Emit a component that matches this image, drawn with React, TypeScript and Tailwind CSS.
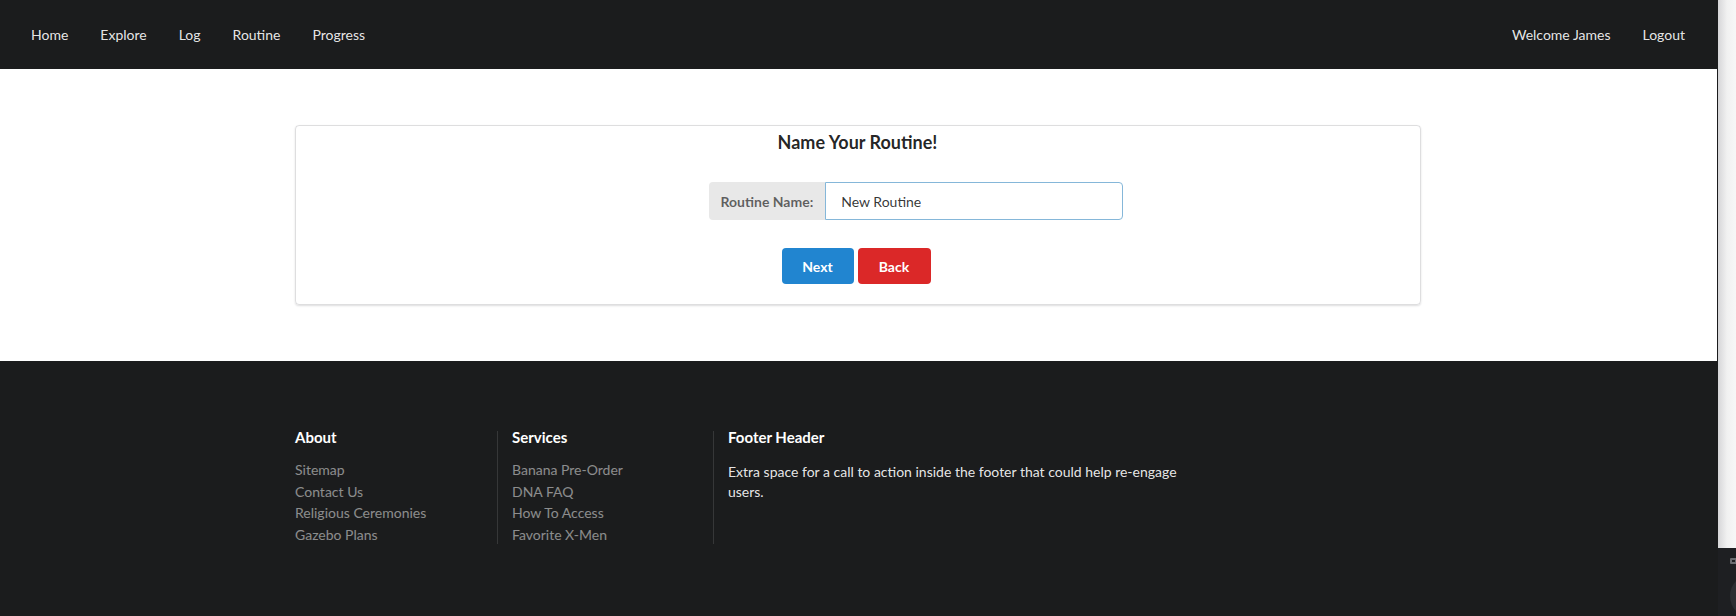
import React from "react";

const font = { fontFamily: "Lato, 'Noto Sans', sans-serif" };

function NavItem({ children }: { children: React.ReactNode }) {
  return <a className="px-[16px] text-[14px] leading-[14px] text-[rgba(255,255,255,0.9)] cursor-pointer">{children}</a>;
}

function FooterLink({ children }: { children: React.ReactNode }) {
  return <div className="h-[21.7px] leading-[21.7px] text-[14px] text-[rgba(255,255,255,0.5)]">{children}</div>;
}

export default function App() {
  return (
    <div className="flex h-[616px] w-[1736px] overflow-hidden bg-white" style={font}>
      <div className="flex w-[1717px] flex-col">
        <nav className="flex h-[69px] shrink-0 items-center justify-between bg-[#1b1c1d] pl-[15px] pr-[16px]">
          <div className="flex items-center">
            <NavItem>Home</NavItem>
            <NavItem>Explore</NavItem>
            <NavItem>Log</NavItem>
            <NavItem>Routine</NavItem>
            <NavItem>Progress</NavItem>
          </div>
          <div className="flex items-center">
            <NavItem>Welcome James</NavItem>
            <NavItem>Logout</NavItem>
          </div>
        </nav>
        <main className="flex h-[292px] shrink-0 justify-center bg-white pt-[56px]">
          <div className="h-[180px] w-[1126px] -translate-x-[1px] rounded-[4px] border border-[rgba(34,36,38,0.15)] shadow-[0_1px_2px_0_rgba(34,36,38,0.15)]">
            <h3 className="pt-[5px] text-center text-[18px] font-bold leading-[23px] text-[rgba(0,0,0,0.87)]">Name Your Routine!</h3>
            <div className="mt-[28px] flex pl-[413px]">
              <div className="flex h-[38px] items-center rounded-l-[4px] bg-[#e8e8e8] px-[12px] text-[14px] font-bold text-[rgba(0,0,0,0.6)]">
                Routine Name:
              </div>
              <div className="flex h-[38px] w-[298px] items-center rounded-r-[4px] border border-[#85b7d9] pl-[15px] text-[14px] text-[rgba(0,0,0,0.8)]">
                New Routine
              </div>
            </div>
            <div className="mt-[28px] flex justify-center gap-[4px] pr-[3px]">
              <button className="h-[36px] w-[72px] rounded-[4px] bg-[#2185d0] text-[14px] font-bold text-white">Next</button>
              <button className="h-[36px] w-[73px] rounded-[4px] bg-[#db2828] text-[14px] font-bold text-white">Back</button>
            </div>
          </div>
        </main>
        <footer className="flex flex-1 justify-center bg-[#1b1c1d] pt-[70px]">
          <div className="w-[1127px]">
            <div className="-ml-[14px] flex h-[113px]">
              <div className="w-[216px] px-[14px]">
                <h4 className="-mt-[1px] text-[15px] font-bold leading-[14px] text-white">About</h4>
                <div className="mt-[15px]">
                  <FooterLink>Sitemap</FooterLink>
                  <FooterLink>Contact Us</FooterLink>
                  <FooterLink>Religious Ceremonies</FooterLink>
                  <FooterLink>Gazebo Plans</FooterLink>
                </div>
              </div>
              <div className="w-[216px] border-l border-[rgba(255,255,255,0.12)] px-[14px]">
                <h4 className="-mt-[1px] text-[15px] font-bold leading-[14px] text-white">Services</h4>
                <div className="mt-[15px]">
                  <FooterLink>Banana Pre-Order</FooterLink>
                  <FooterLink>DNA FAQ</FooterLink>
                  <FooterLink>How To Access</FooterLink>
                  <FooterLink>Favorite X-Men</FooterLink>
                </div>
              </div>
              <div className="w-[505px] border-l border-[rgba(255,255,255,0.12)] pl-[14px] pr-[14px]">
                <h4 className="-mt-[1px] text-[15px] font-bold leading-[14px] text-white">Footer Header</h4>
                <p className="mt-[18px] text-[14px] leading-[20px] text-[rgba(255,255,255,0.9)]">
                  Extra space for a call to action inside the footer that could help re-engage
                  <br />
                  users.
                </p>
              </div>
            </div>
          </div>
        </footer>
      </div>
      <div className="flex w-[19px] flex-col border-l border-[#1b1c1d]">
        <div className="h-[548px] bg-gradient-to-r from-[#d6d6d8] via-[#f1f1f1] to-[#f7f7f7]" />
        <div className="relative flex-1 bg-[#1e1f22]">
          <div className="absolute left-[12px] top-[10px] h-[6px] w-[7px] rounded-[1px] border-2 border-[#6b6c70]" />
          <div className="absolute left-[12px] top-[26px] h-[44px] w-[44px] rounded-full bg-[#2d2e32]" />
        </div>
      </div>
    </div>
  );
}
